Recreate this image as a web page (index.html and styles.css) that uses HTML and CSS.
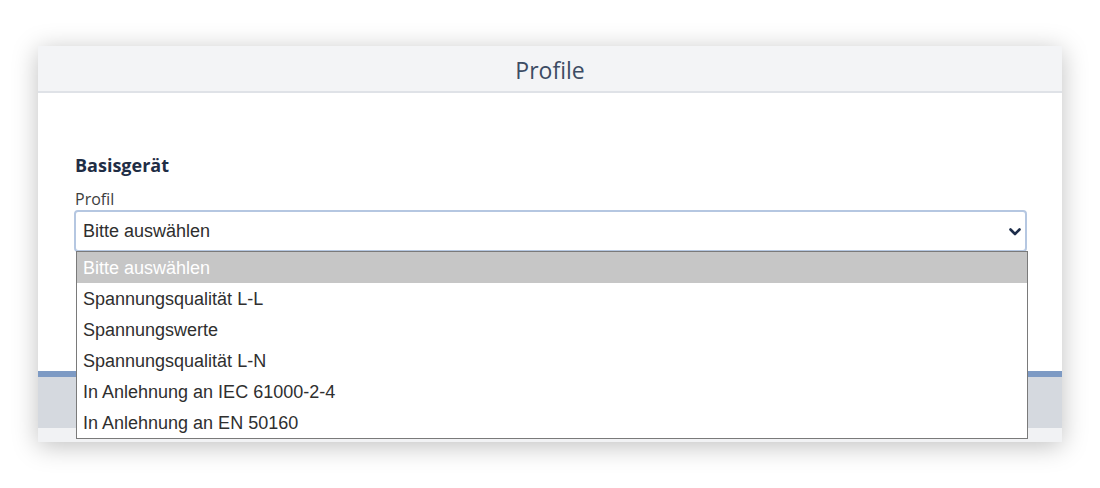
FILE: index.html
```html
<!DOCTYPE html>
<html lang="de">
<head>
<meta charset="utf-8">
<title>Profile</title>
<link rel="stylesheet" href="styles.css">
</head>
<body>
<div class="page">
  <section class="modal">
    <header class="modal-header">Profile</header>
    <div class="modal-body">
      <h2 class="section-title">Basisgerät</h2>
      <label class="field-label">Profil</label>
      <div class="select-wrap">
        <div class="select">
          <span class="select-value">Bitte auswählen</span>
          <svg class="chevron" width="12" height="8" viewBox="0 0 12 8" aria-hidden="true">
            <path d="M1.5 1.5 L6 6 L10.5 1.5" fill="none" stroke="#1d2d4a" stroke-width="2.6" stroke-linecap="round" stroke-linejoin="round"/>
          </svg>
        </div>
        <ul class="dropdown">
          <li class="option active">Bitte auswählen</li>
          <li class="option">Spannungsqualität L-L</li>
          <li class="option">Spannungswerte</li>
          <li class="option">Spannungsqualität L-N</li>
          <li class="option">In Anlehnung an IEC 61000-2-4</li>
          <li class="option">In Anlehnung an EN 50160</li>
        </ul>
      </div>
    </div>
    <div class="modal-footer">
      <div class="footer-accent"></div>
      <div class="footer-bar"></div>
      <div class="footer-bottom"></div>
    </div>
  </section>
</div>
</body>
</html>
```

FILE: styles.css
```css
html, body {
  margin: 0;
  padding: 0;
  background: #ffffff;
}

.page {
  width: 1100px;
  height: 488px;
  padding: 46px 0 0 38px;
  box-sizing: border-box;
}

.modal {
  width: 1024px;
  height: 396px;
  background: #ffffff;
  box-shadow: 0 4px 24px rgba(0, 0, 0, 0.25);
  display: flex;
  flex-direction: column;
}

.modal-header {
  height: 47px;
  border-bottom: 2px solid #dfe2e7;
  background: #f3f4f6;
  display: flex;
  align-items: center;
  justify-content: center;
  font-family: "Open Sans", "Noto Sans", sans-serif;
  font-size: 23px;
  color: #3c4c64;
  padding-top: 2px;
  box-sizing: border-box;
}

.modal-body {
  flex: 1;
  padding: 60px 35px 0 36px;
}

.section-title {
  margin: 0;
  padding-left: 1px;
  font-family: "Open Sans", "Noto Sans", sans-serif;
  font-size: 18px;
  line-height: 24px;
  font-weight: 700;
  color: #1f2d45;
}

.field-label {
  display: block;
  margin-top: 12px;
  padding-left: 1px;
  font-family: "Open Sans", "Noto Sans", sans-serif;
  font-size: 16px;
  line-height: 20px;
  color: #3d3d3d;
}

.select-wrap {
  position: relative;
  margin-top: 1px;
}

.select {
  height: 42px;
  box-sizing: border-box;
  border: 2px solid #b5c7e1;
  border-radius: 4px;
  display: flex;
  align-items: center;
  justify-content: space-between;
  padding: 0 4px 0 7px;
  font-family: "Liberation Sans", Arial, sans-serif;
  font-size: 18px;
  color: #2e2e2e;
}

.chevron {
  display: block;
  margin-top: 1px;
}

.dropdown {
  position: absolute;
  top: 41px;
  left: 2px;
  right: -1px;
  margin: 0;
  padding: 0;
  list-style: none;
  background: #ffffff;
  border: 1px solid #7a7a7a;
  z-index: 2;
}

.option {
  height: 31px;
  line-height: 32px;
  padding-left: 6px;
  font-family: "Liberation Sans", Arial, sans-serif;
  font-size: 18px;
  color: #2f2f2f;
  white-space: nowrap;
}

.option.active {
  background: #c6c6c6;
  color: #ffffff;
}

.modal-footer {
  display: flex;
  flex-direction: column;
}

.footer-accent {
  height: 6px;
  background: #7d9ac4;
}

.footer-bar {
  height: 51px;
  background: #d5d9df;
}

.footer-bottom {
  height: 14px;
  background: #f1f2f4;
}
```
